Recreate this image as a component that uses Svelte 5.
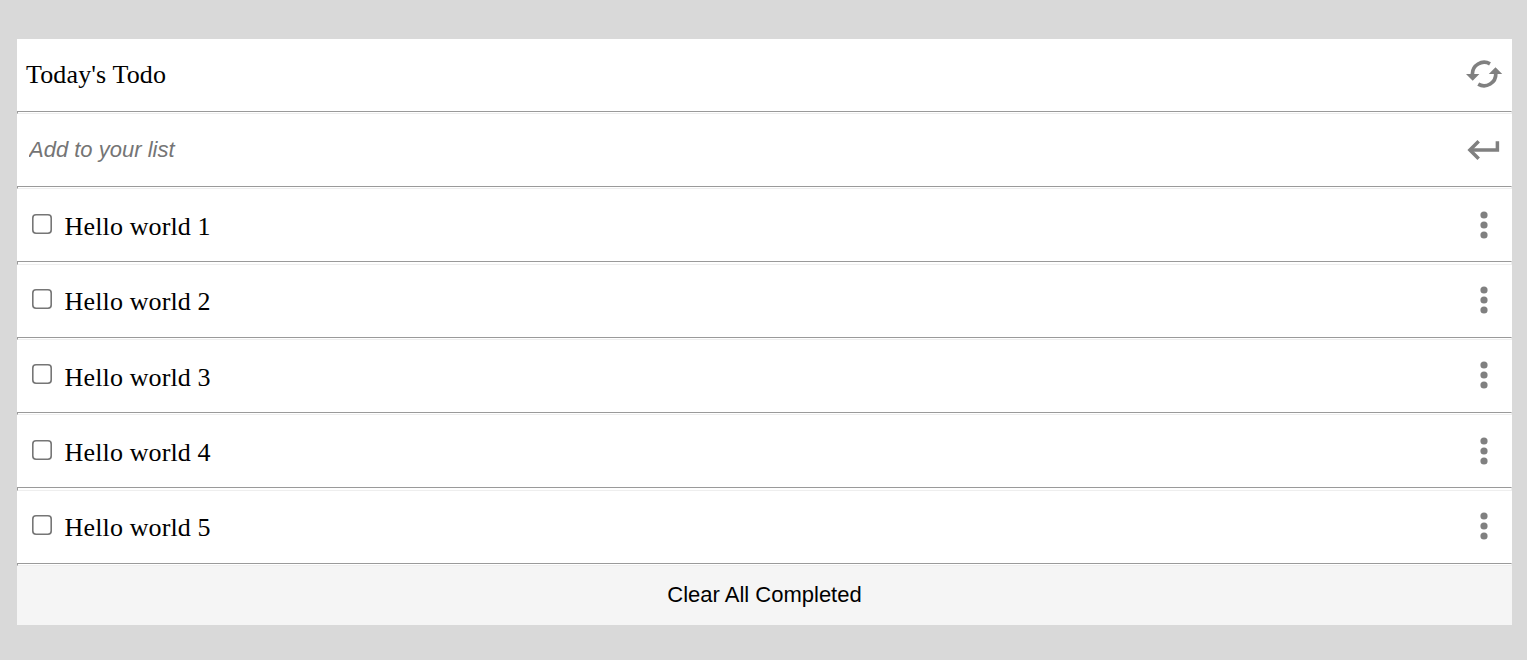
<script>
  let draft = $state('');
  let todos = $state([1, 2, 3, 4, 5].map((n) => ({ text: `Hello world ${n}`, done: false })));

  function add() {
    if (!draft.trim()) return;
    todos.push({ text: draft.trim(), done: false });
    draft = '';
  }
  function clearCompleted() {
    todos = todos.filter((t) => !t.done);
  }
</script>

<main>
  <header class="row">
    <h1>Today's Todo</h1>
    <svg class="icon" width="38" height="30" viewBox="0 0 38 30">
      <g fill="none" stroke="#808080" stroke-width="3.7">
        <path d="M7.4 14.5A11.8 11.8 0 0 1 25 3.8" />
        <path d="M30.8 13.5A11.8 11.8 0 0 1 13.2 24.2" />
      </g>
      <path fill="#808080" d="M1 13.9H14.4L7.7 20.8ZM23.8 14H37.2L30.5 7.2Z" />
    </svg>
  </header>
  <hr />
  <div class="row">
    <input class="entry" placeholder="Add to your list" bind:value={draft} onkeydown={(e) => e.key === 'Enter' && add()} />
    <svg class="icon" width="38" height="30" viewBox="0 0 38 30">
      <g fill="none" stroke="#808080" stroke-width="3.5">
        <path d="M32.4 6.2V15H5" />
        <path d="M13.7 6.2L4.9 15L13.7 23.8" />
      </g>
    </svg>
  </div>
  <hr />
  {#each todos as todo}
    <div class="row">
      <input class="check" type="checkbox" bind:checked={todo.done} />
      <span class="label">{todo.text}</span>
      <svg class="icon dots" width="38" height="30" viewBox="0 0 38 30">
        <g fill="#808080">
          <circle cx="19" cy="5" r="3.6" />
          <circle cx="19" cy="15" r="3.6" />
          <circle cx="19" cy="25" r="3.6" />
        </g>
      </svg>
    </div>
    <hr />
  {/each}
  <button onclick={clearCompleted}>Clear All Completed</button>
</main>

<style>
  :global(body) {
    margin: 0;
    background: #d9d9d9;
  }
  main {
    margin: 38.7px 15px 0 17px;
    display: flex;
    flex-direction: column;
    background: #fff;
    font-family: 'Liberation Serif', 'Times New Roman', serif;
    color: #000;
  }
  .row {
    box-sizing: border-box;
    height: 72px;
    padding: 0 9px;
    display: flex;
    align-items: center;
  }
  h1 {
    margin: 0;
    flex: 1;
    font-size: 26px;
    font-weight: 400;
    line-height: 30px;
    letter-spacing: 0.13px;
  }
  hr {
    box-sizing: border-box;
    width: 100%;
    height: 3.33px;
    margin: 0;
    border: 1px solid;
    border-color: #9a9a9a #eee #eee #9a9a9a;
  }
  .entry {
    flex: 1;
    min-width: 0;
    margin: 0;
    padding: 0 3px;
    border: 0;
    outline: 0;
    background: none;
    font: italic 22px 'Liberation Sans', Arial, sans-serif;
  }
  .entry::placeholder {
    color: #757575;
    opacity: 1;
  }
  .check {
    appearance: none;
    box-sizing: border-box;
    width: 20px;
    height: 20px;
    margin: 0 12.6px 3.15px 6px;
    border: 0;
    box-shadow: inset 0 0 0 1.6px #767676;
    border-radius: 4px;
    background: #fff;
  }
  .check:checked {
    background: #0075ff;
    box-shadow: none;
  }
  .label {
    flex: 1;
    padding-top: 3.3px;
    font-size: 26px;
    line-height: 30px;
    letter-spacing: 0.13px;
  }
  .icon {
    flex: none;
    display: block;
  }
  .dots {
    margin-bottom: 1.15px;
  }
  button {
    height: 59px;
    padding: 0 0 1px;
    border: 0;
    background: #f5f5f5;
    color: #000;
    font: 22px 'Liberation Sans', Arial, sans-serif;
  }
</style>
